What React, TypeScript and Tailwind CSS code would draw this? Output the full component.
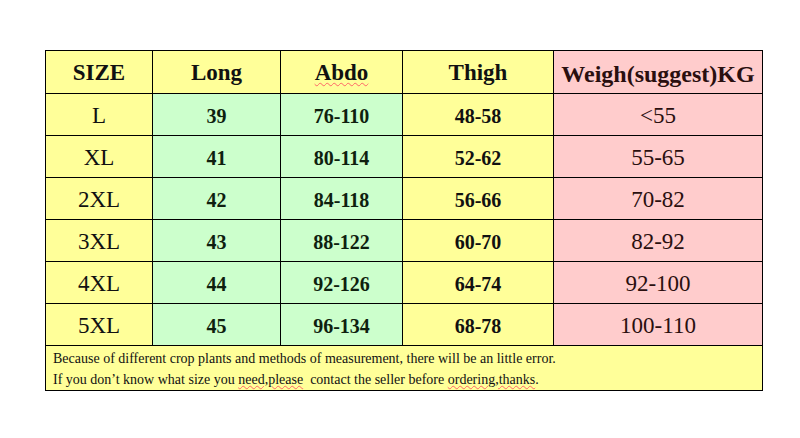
const rows = [
  { size: "L", long: "39", abdo: "76-110", thigh: "48-58", weigh: "<55" },
  { size: "XL", long: "41", abdo: "80-114", thigh: "52-62", weigh: "55-65" },
  { size: "2XL", long: "42", abdo: "84-118", thigh: "56-66", weigh: "70-82" },
  { size: "3XL", long: "43", abdo: "88-122", thigh: "60-70", weigh: "82-92" },
  { size: "4XL", long: "44", abdo: "92-126", thigh: "64-74", weigh: "92-100" },
  { size: "5XL", long: "45", abdo: "96-134", thigh: "68-78", weigh: "100-110" },
];

const cell = "border border-black text-center align-middle px-0 pt-[3px] pb-0";

export default function App() {
  return (
    <div
      className="w-[800px] h-[438px] bg-white pt-[50px] pl-[45px] text-[#111]"
      style={{ fontFamily: '"Liberation Serif", "Times New Roman", serif' }}
    >
      <table className="table-fixed border-collapse w-[717px]">
        <colgroup>
          <col className="w-[107px]" />
          <col className="w-[128px]" />
          <col className="w-[122px]" />
          <col className="w-[151px]" />
          <col className="w-[209px]" />
        </colgroup>
        <thead>
          <tr className="h-[43px] text-[23px] font-bold">
            <th className={`${cell} bg-[#ffff99]`}>SIZE</th>
            <th className={`${cell} bg-[#ffff99]`}>Long</th>
            <th className={`${cell} bg-[#ffff99]`}>
              <span className="underline decoration-wavy decoration-red-400 decoration-1 underline-offset-2">
                Abdo
              </span>
            </th>
            <th className={`${cell} bg-[#ffff99]`}>Thigh</th>
            <th className={`${cell} bg-[#ffcccc] text-[24px] text-[#2a0f0f]`}>
              Weigh(suggest)KG
            </th>
          </tr>
        </thead>
        <tbody>
          {rows.map((r) => (
            <tr key={r.size} className="h-[42px]">
              <td className={`${cell} bg-[#ffff99] text-[23px]`}>{r.size}</td>
              <td className={`${cell} bg-[#ccffcc] text-[20px] font-bold text-[#0f1f0f]`}>
                {r.long}
              </td>
              <td className={`${cell} bg-[#ccffcc] text-[20px] font-bold text-[#0f1f0f]`}>
                {r.abdo}
              </td>
              <td className={`${cell} bg-[#ffff99] text-[20px] font-bold`}>{r.thigh}</td>
              <td className={`${cell} bg-[#ffcccc] text-[23px] text-[#2a0f0f]`}>
                {r.weigh}
              </td>
            </tr>
          ))}
          <tr className="h-[42px]">
            <td
              colSpan={5}
              className="border border-black bg-[#ffff99] px-[7px] pt-[2px] text-left text-[14px] leading-[21px] align-middle"
            >
              <div>
                Because of different crop plants and methods of measurement, there will be an little error.
              </div>
              <div>
                If you don’t know what size you{" "}
                <span className="underline decoration-wavy decoration-red-400 decoration-1">
                  need,please
                </span>{" "}
                {"\u00a0"}contact the seller before{" "}
                <span className="underline decoration-wavy decoration-red-400 decoration-1">
                  ordering,thanks
                </span>
                .
              </div>
            </td>
          </tr>
        </tbody>
      </table>
    </div>
  );
}
